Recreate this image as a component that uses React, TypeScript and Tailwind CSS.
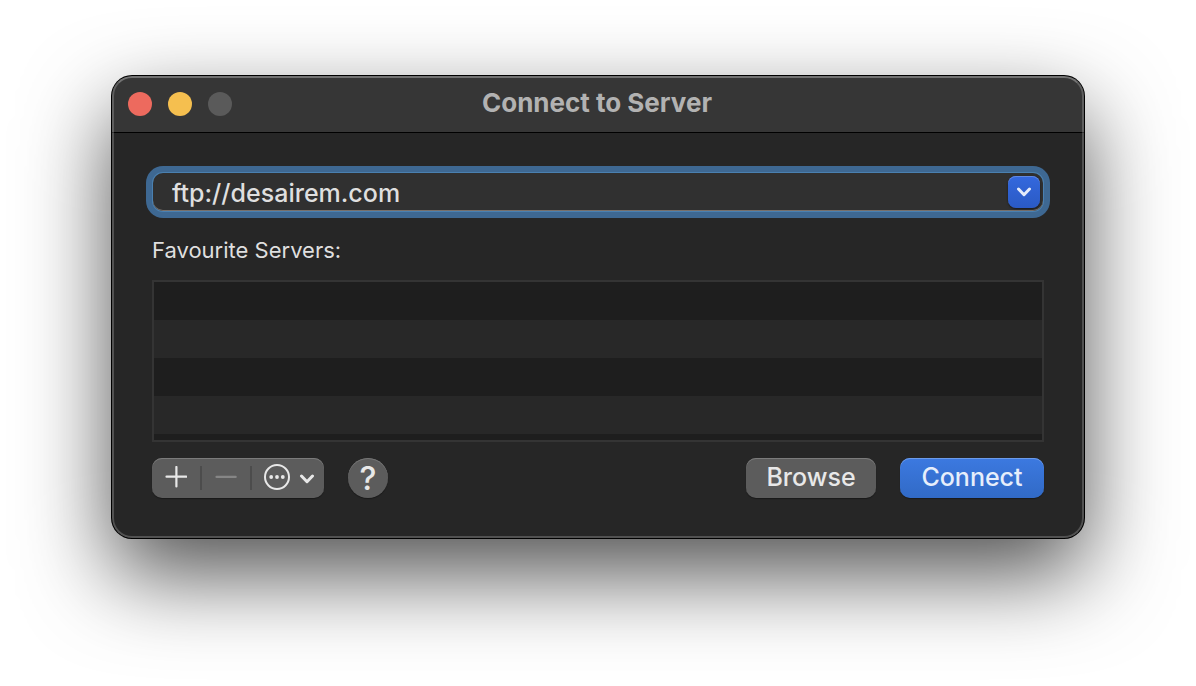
import { useState } from "react";

const rows = ["bg-[#1e1e1e]", "bg-[#282828]", "bg-[#1e1e1e]", "bg-[#282828]", "bg-[#1e1e1e]"];

function TitleBar() {
  return (
    <header className="grid h-[57px] grid-cols-[1fr_auto_1fr] items-center border-b border-black bg-[#363636] px-4">
      <div className="flex gap-4">
        <button type="button" aria-label="Close" className="size-6 rounded-full bg-[#ed6a5e]" />
        <button type="button" aria-label="Minimise" className="size-6 rounded-full bg-[#f5bf4f]" />
        <button type="button" aria-label="Zoom" disabled className="size-6 rounded-full bg-[#5a5a5a]" />
      </div>
      <h1 className="pr-0.5 pb-0.5 text-[26px] leading-8 font-bold text-[#b2b2b2]">Connect to Server</h1>
    </header>
  );
}

function Chevron() {
  return (
    <svg viewBox="0 0 16 10" className="h-[10px] w-4" fill="none" stroke="currentColor" strokeWidth="3" strokeLinecap="round" strokeLinejoin="round" aria-hidden="true">
      <path d="M2.5 2 8 7.7 13.5 2" />
    </svg>
  );
}

function AddressField() {
  const [address, setAddress] = useState("ftp://desairem.com");
  return (
    <div className="mx-px flex h-[38px] items-center rounded-[10px] bg-[#303030] pr-[3px] shadow-[inset_0_-1px_0_#77706b,0_0_0_1px_#4a80b0,0_0_0_7px_#3e6892]">
      <input
        type="text"
        aria-label="Server address"
        value={address}
        onChange={(event) => setAddress(event.target.value)}
        className="h-full min-w-0 flex-1 bg-transparent pt-0.5 pr-4 pl-[19px] text-[25px] leading-8 font-medium text-[#dfdfdf] outline-none"
      />
      <button
        type="button"
        aria-label="Recent servers"
        className="flex size-8 items-center justify-center rounded-lg bg-linear-to-b from-[#3468de] to-[#2a5ac4] text-[#e4ebfa] shadow-[inset_0_1px_0_#5f88e4,0_1px_2px_#00000080]"
      >
        <Chevron />
      </button>
    </div>
  );
}

function ListActions() {
  return (
    <div className="flex h-10 items-center rounded-[10px] bg-[#5c5c5c] text-[#e8e8e8] shadow-[inset_0_1px_0_#7b7b7b,0_1px_1px_#00000059]">
      <button type="button" aria-label="Add" className="flex h-10 w-12 items-center justify-center pb-0.5">
        <svg viewBox="0 0 22 22" className="size-[22px]" fill="none" stroke="currentColor" strokeWidth="2.2" strokeLinecap="round" aria-hidden="true">
          <path d="M11.4 1v19.5M1.5 10.7h19.8" />
        </svg>
      </button>
      <span className="h-6 w-0.5 bg-[#4c4c4c]" />
      <button type="button" aria-label="Remove" disabled className="flex h-10 w-12 items-center justify-center pb-0.5 text-[#868686]">
        <svg viewBox="0 0 22 22" className="size-[22px]" fill="none" stroke="currentColor" strokeWidth="2.2" strokeLinecap="round" aria-hidden="true">
          <path d="M1.5 10.9h19.2" />
        </svg>
      </button>
      <span className="h-6 w-0.5 bg-[#4c4c4c]" />
      <button type="button" aria-label="More options" className="flex h-10 w-[72px] items-center justify-center gap-[9px] pb-0.5 pl-[3px]">
        <svg viewBox="0 0 26 26" className="size-[26px]" aria-hidden="true">
          <circle cx="13" cy="13" r="12" fill="none" stroke="currentColor" strokeWidth="2" />
          <g fill="currentColor">
            <circle cx="7.2" cy="13" r="1.9" />
            <circle cx="13" cy="13" r="1.9" />
            <circle cx="18.8" cy="13" r="1.9" />
          </g>
        </svg>
        <span className="flex pt-1"><Chevron /></span>
      </button>
    </div>
  );
}

export default function App() {
  return (
    <div className="min-h-screen bg-white px-28 pt-[76px] pb-[148px] font-['Inter','Liberation_Sans',sans-serif]">
      <main className="relative overflow-hidden rounded-[20px] bg-[#262626] shadow-[0_0_0_1px_#000000,0_36px_88px_#000000b0]">
        <TitleBar />
        <div className="px-10 pt-10 pb-10">
          <AddressField />
          <h2 id="favourites" className="mt-[23px] text-[22px] leading-8 text-[#dfdfdf]">Favourite Servers:</h2>
          <ul aria-labelledby="favourites" className="mt-[14px] h-[162px] overflow-hidden border-2 border-[#343434]">
            {rows.map((shade, index) => (
              <li key={index} className={`h-[38px] ${shade}`} />
            ))}
          </ul>
          <div className="mt-4 flex items-center gap-6 text-[25px] leading-8 font-medium">
            <ListActions />
            <button type="button" aria-label="Help" className="flex size-10 items-center justify-center rounded-full bg-[#5c5c5c] pt-0.5 text-[32px] text-[#e8e8e8] shadow-[inset_0_1px_0_#757575,0_1px_1px_#00000059]">
              ?
            </button>
            <button type="button" className="ml-auto h-10 w-[130px] rounded-[10px] bg-[#5c5c5c] px-1.5 pb-0.5 text-[#e8e8e8] shadow-[inset_0_1px_0_#7b7b7b,0_1px_1px_#00000059]">
              Browse
            </button>
            <button type="button" className="h-10 w-36 rounded-[10px] bg-linear-to-b from-[#3c79e0] to-[#316ac6] px-1.5 pb-0.5 text-[#e6eefb] shadow-[inset_0_1px_0_#6c9bea,0_1px_1px_#00000059]">
              Connect
            </button>
          </div>
        </div>
        <div className="pointer-events-none absolute inset-0 rounded-[20px] border-2 border-white/20 border-t-white/30" />
      </main>
    </div>
  );
}
